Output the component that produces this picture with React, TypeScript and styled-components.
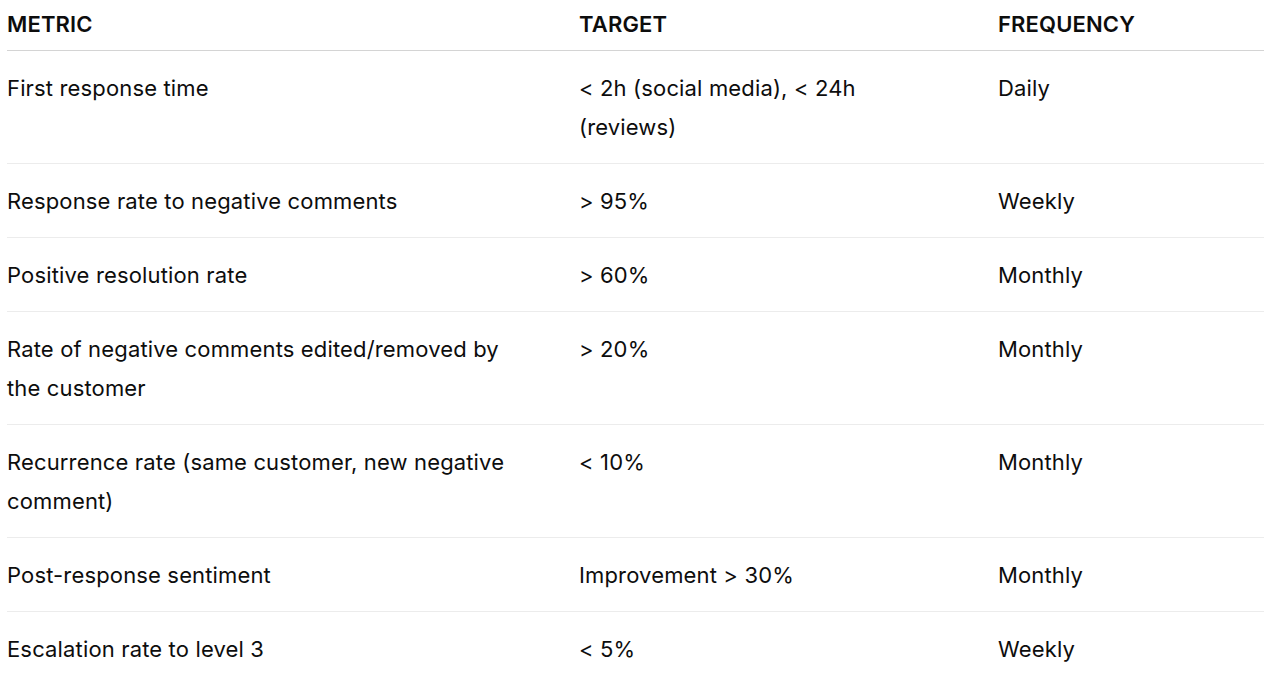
import React from "react";
import styled, { createGlobalStyle } from "styled-components";

const GlobalStyle = createGlobalStyle`
  html, body {
    margin: 0;
    padding: 0;
    background: #ffffff;
  }
  body {
    font-family: Inter, "Noto Sans", "Liberation Sans", sans-serif;
    color: #0d0d0d;
  }
`;

const rows = [
  { metric: "First response time", target: "< 2h (social media), < 24h (reviews)", frequency: "Daily" },
  { metric: "Response rate to negative comments", target: "> 95%", frequency: "Weekly" },
  { metric: "Positive resolution rate", target: "> 60%", frequency: "Monthly" },
  { metric: "Rate of negative comments edited/removed by the customer", target: "> 20%", frequency: "Monthly" },
  { metric: "Recurrence rate (same customer, new negative comment)", target: "< 10%", frequency: "Monthly" },
  { metric: "Post-response sentiment", target: "Improvement > 30%", frequency: "Monthly" },
  { metric: "Escalation rate to level 3", target: "< 5%", frequency: "Weekly" },
];

const Table = styled.div`
  margin: 0 16px 0 7px;
  display: grid;
  grid-template-columns: 572px 419px 1fr;
  font-size: 22px;
  line-height: 39px;
  letter-spacing: 0.15px;
`;

const Row = styled.div<{ $head?: boolean; $last?: boolean }>`
  display: contents;
  & > div {
    border-bottom: 1px solid ${p => (p.$head ? "#d4d4d4" : p.$last ? "transparent" : "#ececec")};
    padding: ${p => (p.$head ? "5px 46px 6px 0" : "18px 46px 16px 0")};
    font-weight: ${p => (p.$head ? 600 : 400)};
  }
`;

const Cell = styled.div``;

const App = (): JSX.Element => {
  return (
    <>
      <GlobalStyle />
      <Table>
        <Row $head>
          <Cell>METRIC</Cell>
          <Cell>TARGET</Cell>
          <Cell>FREQUENCY</Cell>
        </Row>
        {rows.map((r, i) => (
          <Row key={r.metric} $last={i === rows.length - 1}>
            <Cell>{r.metric}</Cell>
            <Cell>{r.target}</Cell>
            <Cell>{r.frequency}</Cell>
          </Row>
        ))}
      </Table>
    </>
  );
};

export default App;
